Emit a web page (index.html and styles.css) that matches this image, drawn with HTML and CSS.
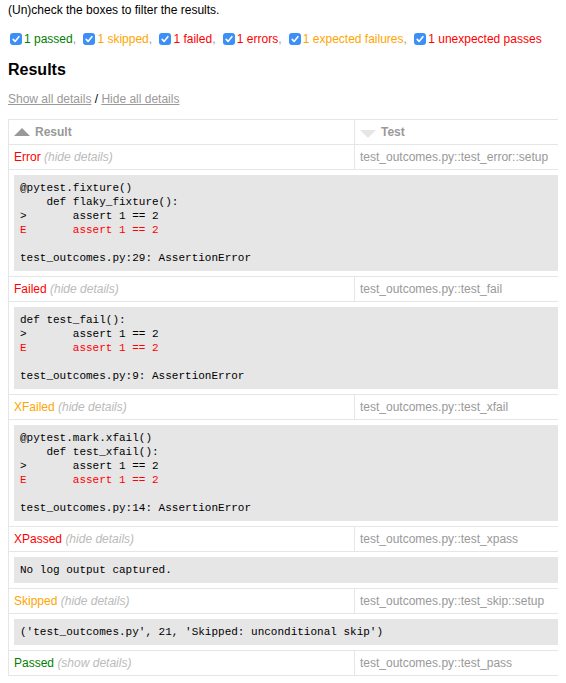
FILE: index.html
```html
<!DOCTYPE html>
<html>
<head>
<meta charset="utf-8">
<title>Test Report</title>
<link rel="stylesheet" href="styles.css">
</head>
<body>
<p class="intro">(Un)check the boxes to filter the results.</p>
<p class="filters">
  <span class="filter"><span class="box"><svg width="12" height="12" viewBox="0 0 12 12"><rect x="0" y="0" width="12" height="12" rx="3" fill="#3b8ff7"/><path d="M3.2 6.4 L5.1 8.4 L8.9 3.7" stroke="#fff" stroke-width="1.6" fill="none" stroke-linecap="round" stroke-linejoin="round"/></svg></span><span class="passed">1 passed</span>, </span>
  <span class="filter"><span class="box"><svg width="12" height="12" viewBox="0 0 12 12"><rect x="0" y="0" width="12" height="12" rx="3" fill="#3b8ff7"/><path d="M3.2 6.4 L5.1 8.4 L8.9 3.7" stroke="#fff" stroke-width="1.6" fill="none" stroke-linecap="round" stroke-linejoin="round"/></svg></span><span class="skipped">1 skipped</span>, </span>
  <span class="filter"><span class="box"><svg width="12" height="12" viewBox="0 0 12 12"><rect x="0" y="0" width="12" height="12" rx="3" fill="#3b8ff7"/><path d="M3.2 6.4 L5.1 8.4 L8.9 3.7" stroke="#fff" stroke-width="1.6" fill="none" stroke-linecap="round" stroke-linejoin="round"/></svg></span><span class="failed">1 failed</span>, </span>
  <span class="filter"><span class="box"><svg width="12" height="12" viewBox="0 0 12 12"><rect x="0" y="0" width="12" height="12" rx="3" fill="#3b8ff7"/><path d="M3.2 6.4 L5.1 8.4 L8.9 3.7" stroke="#fff" stroke-width="1.6" fill="none" stroke-linecap="round" stroke-linejoin="round"/></svg></span><span class="failed">1 errors</span>, </span>
  <span class="filter"><span class="box"><svg width="12" height="12" viewBox="0 0 12 12"><rect x="0" y="0" width="12" height="12" rx="3" fill="#3b8ff7"/><path d="M3.2 6.4 L5.1 8.4 L8.9 3.7" stroke="#fff" stroke-width="1.6" fill="none" stroke-linecap="round" stroke-linejoin="round"/></svg></span><span class="skipped">1 expected failures</span>, </span>
  <span class="filter"><span class="box"><svg width="12" height="12" viewBox="0 0 12 12"><rect x="0" y="0" width="12" height="12" rx="3" fill="#3b8ff7"/><path d="M3.2 6.4 L5.1 8.4 L8.9 3.7" stroke="#fff" stroke-width="1.6" fill="none" stroke-linecap="round" stroke-linejoin="round"/></svg></span><span class="failed">1 unexpected passes</span></span>
</p>
<h2>Results</h2>
<p class="toggles"><a href="#">Show all details</a> / <a href="#">Hide all details</a></p>
<div class="table-wrap">
<table class="results">
  <colgroup><col class="col-a"><col class="col-b"></colgroup>
  <thead>
    <tr>
      <th><span class="sort-icon asc"></span>Result</th>
      <th><span class="sort-icon inactive"></span>Test</th>
    </tr>
  </thead>
  <tbody>
    <tr><td><span class="failed">Error</span> <span class="toggle">(hide details)</span></td><td>test_outcomes.py::test_error::setup</td></tr>
    <tr><td colspan="2"><div class="log">@pytest.fixture()
    def flaky_fixture():
&gt;       assert 1 == 2
<span class="err">E       assert 1 == 2</span>

test_outcomes.py:29: AssertionError</div></td></tr>
    <tr><td><span class="failed">Failed</span> <span class="toggle">(hide details)</span></td><td>test_outcomes.py::test_fail</td></tr>
    <tr><td colspan="2"><div class="log">def test_fail():
&gt;       assert 1 == 2
<span class="err">E       assert 1 == 2</span>

test_outcomes.py:9: AssertionError</div></td></tr>
    <tr><td><span class="skipped">XFailed</span> <span class="toggle">(hide details)</span></td><td>test_outcomes.py::test_xfail</td></tr>
    <tr><td colspan="2"><div class="log">@pytest.mark.xfail()
    def test_xfail():
&gt;       assert 1 == 2
<span class="err">E       assert 1 == 2</span>

test_outcomes.py:14: AssertionError</div></td></tr>
    <tr><td><span class="failed">XPassed</span> <span class="toggle">(hide details)</span></td><td>test_outcomes.py::test_xpass</td></tr>
    <tr><td colspan="2"><div class="log">No log output captured.</div></td></tr>
    <tr><td><span class="skipped">Skipped</span> <span class="toggle">(hide details)</span></td><td>test_outcomes.py::test_skip::setup</td></tr>
    <tr><td colspan="2"><div class="log">('test_outcomes.py', 21, 'Skipped: unconditional skip')</div></td></tr>
    <tr><td><span class="passed">Passed</span> <span class="toggle">(show details)</span></td><td>test_outcomes.py::test_pass</td></tr>
  </tbody>
</table>
</div>
</body>
</html>
```

FILE: styles.css
```css
html {
  overflow: hidden;
}
body {
  margin: 0 8px;
  font-family: "Liberation Sans", Arial, Helvetica, sans-serif;
  font-size: 12px;
  line-height: 14px;
  color: #999;
  background: #fff;
}
p {
  margin: 12px 0;
  color: #000;
}
.intro {
  margin-top: 3px;
  margin-bottom: 15px;
}
.filters {
  color: #999;
  margin-left: -2px;
  display: flex;
  align-items: center;
  white-space: pre;
}
.filter {
  display: inline-flex;
  align-items: center;
}
.box {
  display: inline-flex;
  width: 12px;
  height: 12px;
  margin: 0 2px 0 4px;
}
.passed { color: green; }
.skipped { color: orange; }
.failed { color: red; }
h2 {
  font-size: 16px;
  line-height: 18px;
  color: #000;
  margin: 15px 0 13px;
}
.toggles {
  margin-bottom: 13px;
}
.toggles a {
  color: #999;
}
.table-wrap {
  margin-right: -8px;
  overflow: hidden;
}
.results {
  border-collapse: collapse;
  border: 1px solid #e6e6e6;
  width: 1184px;
  table-layout: fixed;
  color: #999;
}
.col-a { width: 346px; }
.results th,
.results td {
  padding: 5px;
  border: 1px solid #e6e6e6;
  text-align: left;
  vertical-align: top;
}
.results th {
  font-weight: bold;
}
.sort-icon {
  float: left;
  width: 0;
  height: 0;
  margin-right: 5px;
  margin-top: 3px;
  border-left: 8px solid transparent;
  border-right: 8px solid transparent;
}
.sort-icon.asc {
  border-bottom: 8px solid #999;
}
.sort-icon.inactive {
  margin-top: 5px;
  border-top: 8px solid #e6e6e6;
}
.toggle {
  color: #bbb;
  font-style: italic;
}
.log {
  background: #e6e6e6;
  border: 1px solid #e6e6e6;
  color: #000;
  font-family: "Liberation Mono", "Courier New", monospace;
  font-size: 11px;
  line-height: 14px;
  padding: 5px;
  white-space: pre-wrap;
}
.err {
  color: red;
}
```
